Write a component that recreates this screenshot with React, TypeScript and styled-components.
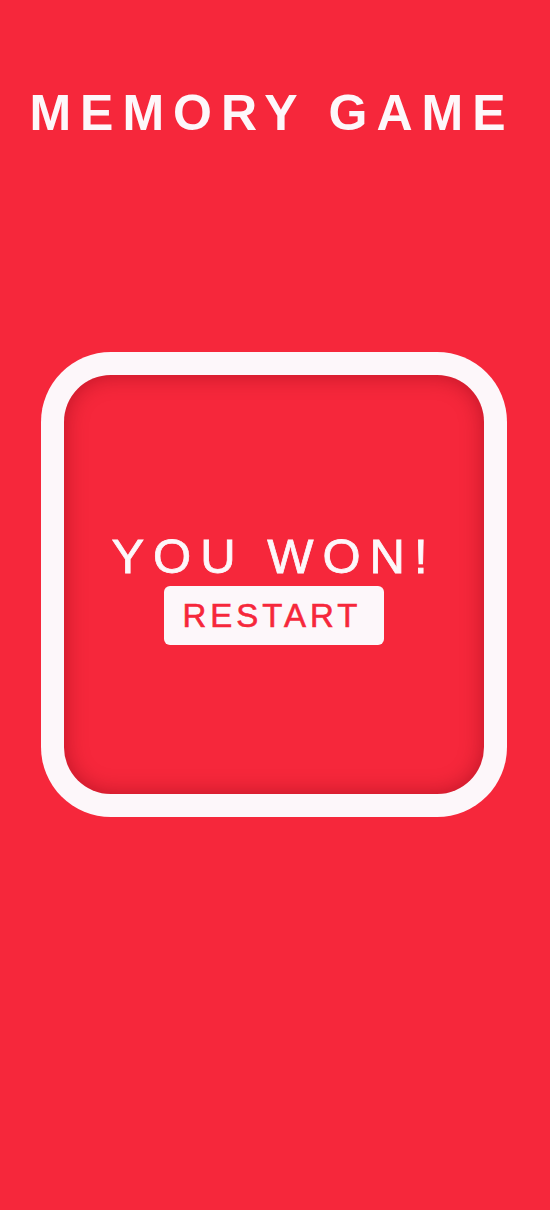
import React from "react";
import styled, { createGlobalStyle } from "styled-components";

const Global = createGlobalStyle`
  html, body {
    margin: 0;
    padding: 0;
    background: #f6273b;
  }
  * { box-sizing: border-box; }
`;

const Page = styled.div`
  min-height: 1210px;
  background: #f6273b;
  display: flex;
  flex-direction: column;
  align-items: center;
  padding-right: 2px;
  font-family: "Liberation Sans", Arial, sans-serif;
`;

const Title = styled.h1`
  margin: 88px 0 0;
  font-family: "Liberation Sans", Arial, sans-serif;
  font-weight: 700;
  font-size: 50px;
  line-height: 1;
  letter-spacing: 9px;
  color: #fdf7fa;
  white-space: nowrap;
  transform: translateX(-2px);
`;

const Frame = styled.div`
  margin-top: 214px;
  width: 466px;
  height: 465px;
  padding: 23px;
  border-radius: 70px;
  background: #fdf7fa;
  display: flex;
`;

const Board = styled.div`
  flex: 1;
  border-radius: 47px;
  background: #f6273b;
  box-shadow: inset 0 0 22px rgba(120, 0, 15, 0.45);
  display: flex;
  flex-direction: column;
  align-items: center;
  justify-content: center;
  padding-top: 8px;
`;

const Message = styled.div`
  font-family: "Liberation Sans", Arial, sans-serif;
  font-size: 49px;
  line-height: 1;
  letter-spacing: 9px;
  color: #fdf7fa;
  -webkit-text-stroke: 0.8px #fdf7fa;
  white-space: nowrap;
`;

const RestartButton = styled.button`
  margin-top: 5px;
  width: 220px;
  height: 59px;
  border: none;
  border-radius: 6px;
  background: #fdf7fa;
  color: #f6273b;
  -webkit-text-stroke: 0.6px #f6273b;
  font-family: "Liberation Sans", Arial, sans-serif;
  font-size: 33px;
  line-height: 59px;
  letter-spacing: 4px;
  padding: 0 4px 0 0;
  cursor: pointer;
`;

export default function App() {
  return (
    <>
      <Global />
      <Page>
        <Title>MEMORY GAME</Title>
        <Frame>
          <Board>
            <Message>YOU WON!</Message>
            <RestartButton>RESTART</RestartButton>
          </Board>
        </Frame>
      </Page>
    </>
  );
}
